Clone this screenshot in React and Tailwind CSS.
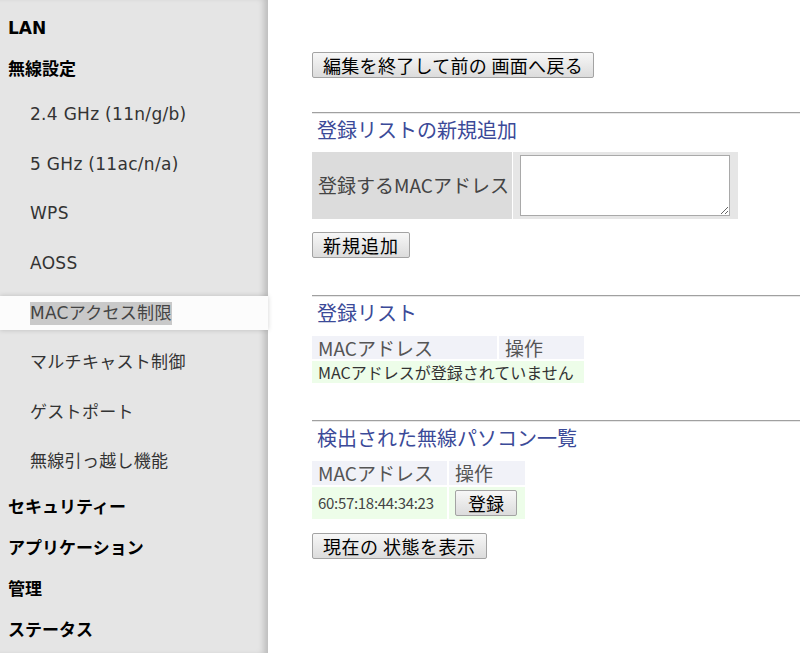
import React from 'react'

const menu = [
  { label: 'LAN', top: true },
  { label: '無線設定', top: true },
  { label: '2.4 GHz (11n/g/b)' },
  { label: '5 GHz (11ac/n/a)' },
  { label: 'WPS' },
  { label: 'AOSS' },
  { label: 'MACアクセス制限', active: true },
  { label: 'マルチキャスト制御' },
  { label: 'ゲストポート' },
  { label: '無線引っ越し機能' },
  { label: 'セキュリティー', top: true },
  { label: 'アプリケーション', top: true },
  { label: '管理', top: true },
  { label: 'ステータス', top: true },
]

function Btn({ children, className = '' }) {
  return (
    <button
      className={
        'h-[26px] border border-[#a3a3a3] rounded-[2px] bg-gradient-to-b from-[#f7f7f7] to-[#dcdcdc] px-[10px] text-[18px] leading-none text-black ' +
        className
      }
    >
      {children}
    </button>
  )
}

function Heading({ children }) {
  return (
    <>
      <div className="h-[2px] border-t border-[#a0a0a0] bg-[#e8e8e8]" />
      <h2 className="pl-[5px] pt-[2px] h-[38px] text-[20px] leading-[28px] text-[#3b4a98]">{children}</h2>
    </>
  )
}

export default function App() {
  return (
    <div className="flex w-[800px] h-[653px] overflow-hidden bg-white font-['DejaVu_Sans','Noto_Sans_CJK_JP',sans-serif]">
      {/* sidebar */}
      <nav className="w-[268px] shrink-0 bg-[#e5e5e5] pt-[8px] shadow-[inset_-7px_0_6px_-3px_rgba(0,0,0,0.18)]">
        {menu.map((m) =>
          m.top ? (
            <div key={m.label} className="h-[41px] flex items-center pl-[8px] text-[17px] font-bold text-black">
              {m.label}
            </div>
          ) : (
            <div key={m.label} className="h-[49.6px] flex items-center">
              <div
                className={
                  'h-[34px] w-full flex items-center pl-[30px] text-[17px] tracking-[0.3px] text-[#333] ' +
                  (m.active ? 'bg-[#fcfcfc] shadow-[0_0_5px_rgba(0,0,0,0.18)]' : '')
                }
              >
                <span className={m.active ? 'bg-[#c9c9c9] text-[#444] leading-[23px]' : ''}>{m.label}</span>
              </div>
            </div>
          )
        )}
      </nav>

      {/* main */}
      <main className="flex-1 pl-[44px] pt-[52px] font-['Noto_Sans_CJK_JP',sans-serif]">
        <Btn className="tracking-[0.3px]">編集を終了して前の 画面へ戻る</Btn>

        <div className="mt-[34px]">
          <Heading>登録リストの新規追加</Heading>
          <table className="border-separate border-spacing-[1px] -ml-[1px] -mt-[1px]">
            <tbody>
              <tr>
                <td className="w-[200px] h-[66px] bg-[#dcdcdc] pl-[6px] text-[19px] text-[#444]">登録するMACアドレス</td>
                <td className="w-[225px] bg-[#e6e6e6] px-[7px] py-[3px]">
                  <textarea className="block w-[210px] h-[61px] border border-[#a9a9a9] bg-white" />
                </td>
              </tr>
            </tbody>
          </table>
          <Btn className="mt-[12px] tracking-[1px]">新規追加</Btn>
        </div>

        <div className="mt-[37px]">
          <Heading>登録リスト</Heading>
          <table className="border-separate border-spacing-[2px] -ml-[2px] -mt-[1px]">
            <tbody>
              <tr className="bg-[#f1f2f8] text-[19px] text-[#555]">
                <td className="w-[185px] h-[23px] pl-[6px] leading-[23px]">MACアドレス</td>
                <td className="w-[85px] pl-[6px] leading-[23px]">操作</td>
              </tr>
              <tr className="bg-[#edfde9] text-[16px] text-[#333]">
                <td colSpan={2} className="h-[22px] pl-[6px] leading-[22px]">MACアドレスが登録されていません</td>
              </tr>
            </tbody>
          </table>
        </div>

        <div className="mt-[35px]">
          <Heading>検出された無線パソコン一覧</Heading>
          <table className="border-separate border-spacing-[2px] -ml-[2px] -mt-[1px]">
            <tbody>
              <tr className="bg-[#f1f2f8] text-[19px] text-[#555]">
                <td className="w-[135px] h-[24px] pl-[6px] leading-[24px]">MACアドレス</td>
                <td className="w-[76px] pl-[6px] leading-[24px]">操作</td>
              </tr>
              <tr className="bg-[#edfde9]">
                <td className="h-[32px] pl-[6px] text-[15px] tracking-[-0.3px] text-[#444]">60:57:18:44:34:23</td>
                <td className="pl-[6px]">
                  <Btn className="!px-[12px]">登録</Btn>
                </td>
              </tr>
            </tbody>
          </table>
          <Btn className="mt-[12px] tracking-[0.5px]">現在の 状態を表示</Btn>
        </div>
      </main>
    </div>
  )
}
